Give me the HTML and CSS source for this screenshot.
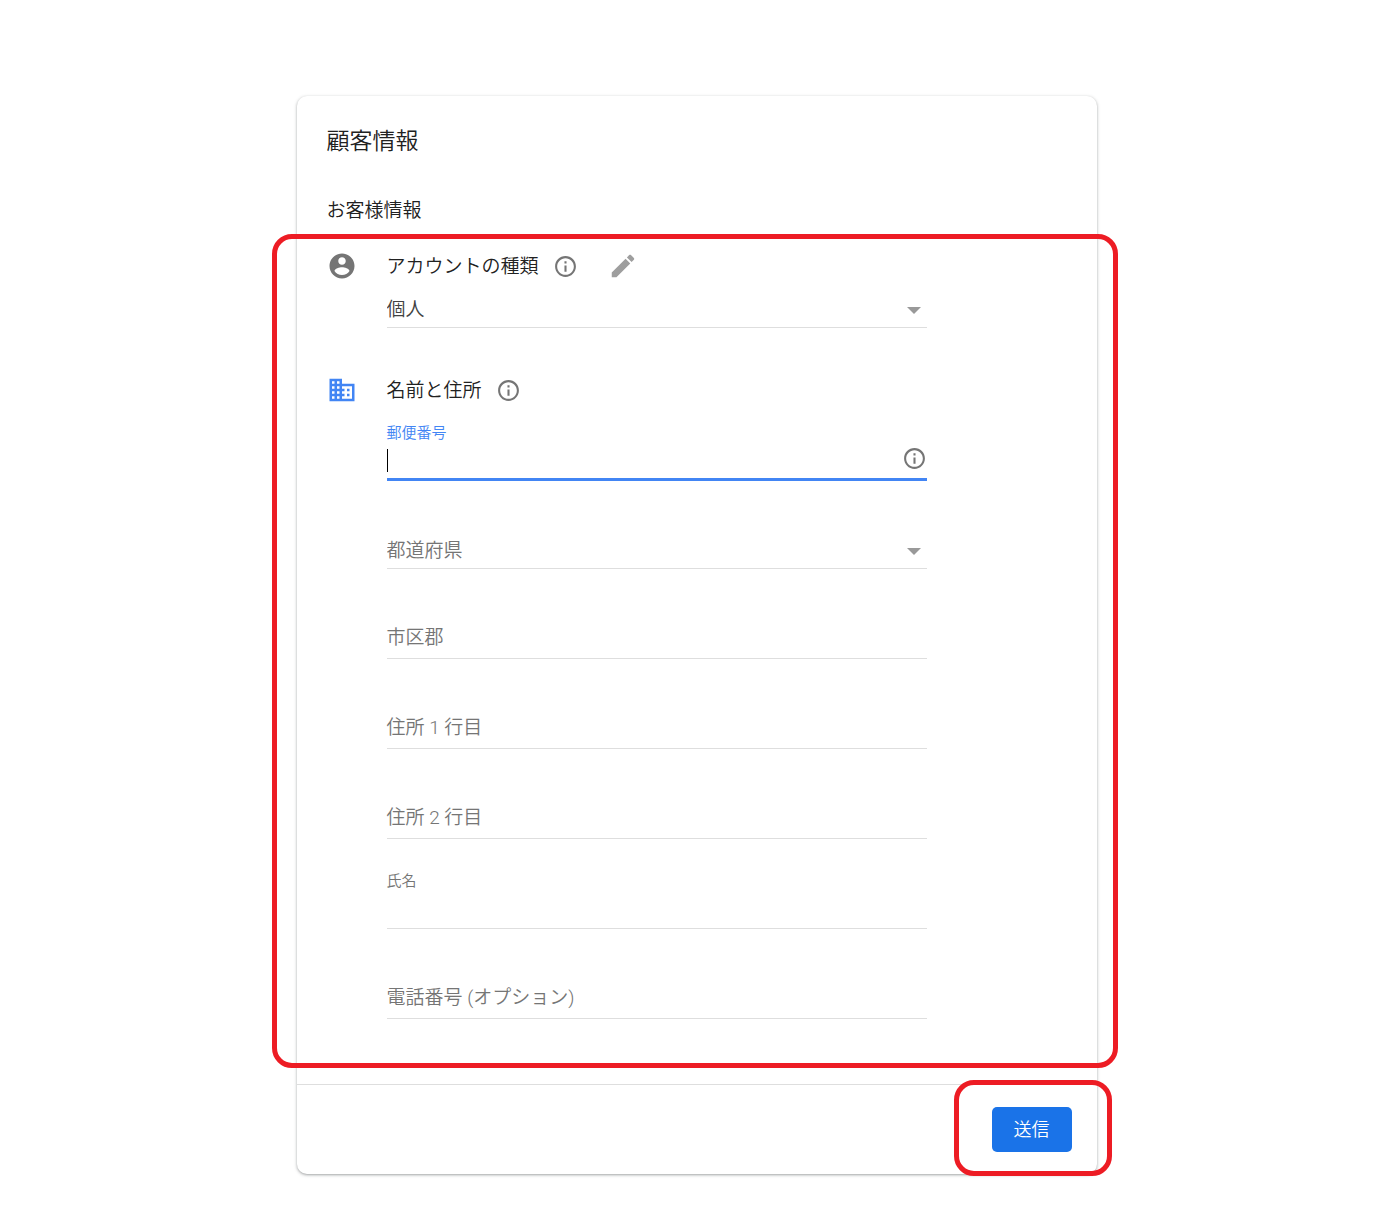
FILE: index.html
```html
<!DOCTYPE html>
<html lang="ja">
<head>
    <meta charset="UTF-8">
    <meta name="viewport" content="width=device-width, initial-scale=1.0">
    <title>顧客情報</title>
    <link rel="stylesheet" href="styles.css">
</head>
<body>
    <!-- Shared info icon -->
    <svg class="sprite" aria-hidden="true">
        <symbol id="icon-info" viewBox="0 0 24 24">
            <path d="M11 17h2v-6h-2v6zm1-15C6.48 2 2 6.48 2 12s4.48 10 10 10 10-4.48 10-10S17.52 2 12 2zm0 18c-4.41 0-8-3.59-8-8s3.59-8 8-8 8 3.59 8 8-3.59 8-8 8zM11 9h2V7h-2v2z"/>
        </symbol>
    </svg>

    <form class="card">
        <div class="card-body">
            <h1>顧客情報</h1>
            <h2>お客様情報</h2>

            <div class="sections">
                <section class="section">
                    <svg class="section-icon" viewBox="0 0 24 24" aria-hidden="true">
                        <path d="M12 2C6.48 2 2 6.48 2 12s4.48 10 10 10 10-4.48 10-10S17.52 2 12 2zm0 3c1.66 0 3 1.34 3 3s-1.34 3-3 3-3-1.34-3-3 1.34-3 3-3zm0 14.2c-2.5 0-4.71-1.28-6-3.22.03-1.99 4-3.08 6-3.08 1.99 0 5.97 1.09 6 3.08-1.29 1.94-3.5 3.22-6 3.22z"/>
                    </svg>
                    <div class="section-content">
                        <div class="section-head">
                            <h3 id="account-type">アカウントの種類</h3>
                            <button type="button" class="icon-button" aria-label="詳細">
                                <svg class="info"><use href="#icon-info"/></svg>
                            </button>
                            <button type="button" class="icon-button edit" aria-label="編集">
                                <svg viewBox="0 0 24 24">
                                    <path d="M3 17.25V21h3.75L17.81 9.94l-3.75-3.75L3 17.25zM20.71 7.04c.39-.39.39-1.02 0-1.41l-2.34-2.34c-.39-.39-1.02-.39-1.41 0l-1.83 1.83 3.75 3.75 1.83-1.83z"/>
                                </svg>
                            </button>
                        </div>
                        <div class="select">
                            <select aria-labelledby="account-type">
                                <option>個人</option>
                                <option>組織</option>
                            </select>
                            <svg class="arrow" viewBox="0 0 14 7" aria-hidden="true"><path d="M0 0h14L7 7z"/></svg>
                        </div>
                    </div>
                </section>

                <section class="section">
                    <svg class="section-icon active" viewBox="0 0 24 24" aria-hidden="true">
                        <path d="M12 7V3H2v18h20V7H12zM6 19H4v-2h2v2zm0-4H4v-2h2v2zm0-4H4V9h2v2zm0-4H4V5h2v2zm4 12H8v-2h2v2zm0-4H8v-2h2v2zm0-4H8V9h2v2zm0-4H8V5h2v2zm10 12h-8v-2h2v-2h-2v-2h2v-2h-2V9h8v10zm-2-8h-2v2h2v-2zm0 4h-2v2h2v-2z"/>
                    </svg>
                    <div class="section-content">
                        <div class="section-head">
                            <h3>名前と住所</h3>
                            <button type="button" class="icon-button" aria-label="詳細">
                                <svg class="info"><use href="#icon-info"/></svg>
                            </button>
                        </div>
                        <div class="fields">
                            <div class="field floating focused">
                                <input type="text" id="postal">
                                <label for="postal">郵便番号</label>
                                <button type="button" class="icon-button hint" aria-label="郵便番号の詳細">
                                    <svg class="info"><use href="#icon-info"/></svg>
                                </button>
                            </div>
                            <div class="field">
                                <div class="select empty">
                                    <select aria-label="都道府県">
                                        <option>都道府県</option>
                                    </select>
                                    <svg class="arrow" viewBox="0 0 14 7" aria-hidden="true"><path d="M0 0h14L7 7z"/></svg>
                                </div>
                            </div>
                            <div class="field">
                                <input type="text" id="city">
                                <label for="city">市区郡</label>
                            </div>
                            <div class="field">
                                <input type="text" id="address1">
                                <label for="address1">住所 1 行目</label>
                            </div>
                            <div class="field">
                                <input type="text" id="address2">
                                <label for="address2">住所 2 行目</label>
                            </div>
                            <div class="field floating">
                                <input type="text" id="name">
                                <label for="name">氏名</label>
                            </div>
                            <div class="field">
                                <input type="tel" id="phone">
                                <label for="phone">電話番号 (オプション)</label>
                            </div>
                        </div>
                    </div>
                </section>
            </div>
        </div>

        <div class="card-footer">
            <div class="submit">
                <button type="submit">送信</button>
            </div>
        </div>
    </form>
</body>
</html>
```
FILE: styles.css
```css
* {
    box-sizing: border-box;
    margin: 0;
    padding: 0;
}

body {
    font-family: Roboto, 'Noto Sans CJK JP', sans-serif;
    font-size: 19px;
    font-weight: 350;
    line-height: 30px;
    color: #212121;
    background-color: #fff;
    padding: 96px 20px 56px;
}

.sprite {
    display: none;
}

.card {
    max-width: 800px;
    margin: 0 auto;
    background-color: #fff;
    border-radius: 10px;
    box-shadow: 0 1px 2px rgba(60, 64, 67, 0.3),
                0 1px 3px 1px rgba(60, 64, 67, 0.15);
}

.card-body {
    padding: 31px 0 16px;
}

h1,
h2 {
    padding: 0 30px;
    font-weight: inherit;
}

h1 {
    font-size: 23px;
    margin-bottom: 39px;
}

h2,
h3 {
    font-size: 19px;
    font-weight: inherit;
}

/* Red frames around the parts to fill in */
.sections,
.submit {
    position: relative;
}

.sections::after,
.submit::after {
    content: '';
    position: absolute;
    border: 5px solid #ed1c24;
    border-radius: 20px;
    pointer-events: none;
}

.sections::after {
    inset: 0 -21px 0 -25px;
}

.submit::after {
    inset: -27px -40px -24px -38px;
}

.sections {
    display: flex;
    flex-direction: column;
    gap: 47px;
    margin-top: 8px;
    padding: 17px 170px 49px 30px;
}

.section {
    display: flex;
    gap: 30px;
}

.section-icon {
    flex: none;
    width: 30px;
    height: 30px;
    fill: #757575;
}

.section-icon.active {
    fill: #4285f4;
}

.section-content {
    flex: 1;
    min-width: 0;
}

.section-head {
    display: flex;
    align-items: center;
    gap: 14px;
    height: 30px;
}

h3 {
    padding-top: 2px;
}

.icon-button {
    display: flex;
    border: none;
    background: none;
    cursor: pointer;
}

.icon-button svg {
    width: 25px;
    height: 25px;
    fill: #757575;
}

.icon-button.edit {
    margin-left: 16px;
}

.icon-button.edit svg {
    width: 30px;
    height: 30px;
    fill: #9e9e9e;
}

.select {
    position: relative;
}

.section-head + .select {
    margin-top: 10px;
}

select,
input {
    display: block;
    width: 100%;
    border: none;
    border-bottom: 1px solid #dedede;
    border-radius: 0;
    background: transparent;
    font: inherit;
    color: #424242;
    outline: none;
}

select {
    appearance: none;
    height: 37px;
    padding-top: 1px;
    cursor: pointer;
}

.empty select {
    color: #757575;
}

.arrow {
    position: absolute;
    right: 6px;
    top: 16px;
    width: 14px;
    height: 7px;
    fill: #999;
    pointer-events: none;
}

.fields {
    display: flex;
    flex-direction: column;
    gap: 31px;
    margin-top: 17px;
}

.field {
    position: relative;
    padding-top: 20px;
}

input {
    height: 39px;
}

.field label {
    position: absolute;
    left: 0;
    top: 23px;
    color: #757575;
    cursor: text;
}

.field.floating label {
    top: 1px;
    font-size: 15px;
    line-height: 20px;
}

.field.focused label {
    color: #4285f4;
}

/* Text cursor at the start of the active field */
.focused input {
    border-bottom: 3px solid #4285f4;
    background: linear-gradient(#000, #000) 0 7px / 1px 23px no-repeat;
}

.hint {
    position: absolute;
    right: 0;
    top: 24px;
}

.card-footer {
    display: flex;
    justify-content: flex-end;
    padding: 22px 25px;
    border-top: 1px solid #dedede;
}

.submit button {
    min-width: 80px;
    height: 45px;
    border: none;
    border-radius: 5px;
    background-color: #1a73e8;
    color: #fff;
    font: inherit;
    font-size: 18px;
    cursor: pointer;
}
```
